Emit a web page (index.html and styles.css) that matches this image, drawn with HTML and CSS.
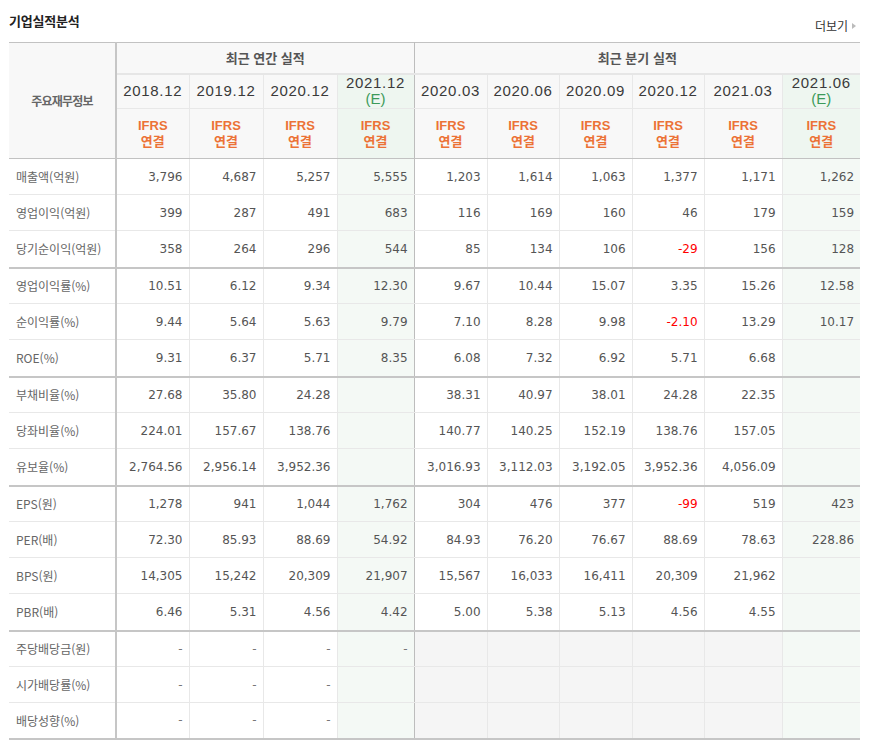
FILE: index.html
```html
<!DOCTYPE html>
<html lang="ko">
<head>
<meta charset="utf-8">
<title>기업실적분석</title>
<link rel="stylesheet" href="styles.css">
</head>
<body>
<div class="wrap">
  <div class="head">
    <h2 class="title">기업실적분석</h2>
    <a class="more" href="#">더보기<span class="arr"></span></a>
  </div>
  <table class="fin">
    <colgroup>
      <col class="c-label"><col class="c73"><col class="c74"><col class="c74"><col class="c77">
      <col class="c73"><col class="c72"><col class="c73"><col class="c72"><col class="c78"><col class="c78">
    </colgroup>
    <thead>
      <tr class="h1">
        <th class="lab-h" rowspan="3">주요재무정보</th>
        <th colspan="4">최근 연간 실적</th>
        <th class="sep" colspan="6">최근 분기 실적</th>
      </tr>
      <tr class="h2">
        <th class="d">2018.12</th><th class="d">2019.12</th><th class="d">2020.12</th>
        <th class="d e">2021.12<br><span class="est">(E)</span></th>
        <th class="d sep">2020.03</th><th class="d">2020.06</th><th class="d">2020.09</th>
        <th class="d">2020.12</th><th class="d">2021.03</th>
        <th class="d e">2021.06<br><span class="est">(E)</span></th>
      </tr>
      <tr class="h3">
        <th class="ifrs">IFRS<br>연결</th><th class="ifrs">IFRS<br>연결</th><th class="ifrs">IFRS<br>연결</th><th class="ifrs e">IFRS<br>연결</th>
        <th class="ifrs sep">IFRS<br>연결</th><th class="ifrs">IFRS<br>연결</th><th class="ifrs">IFRS<br>연결</th><th class="ifrs">IFRS<br>연결</th><th class="ifrs">IFRS<br>연결</th><th class="ifrs e">IFRS<br>연결</th>
      </tr>
    </thead>
    <tbody>
      <tr>
        <th class="lab">매출액(억원)</th>
        <td>3,796</td><td>4,687</td><td>5,257</td><td class="e">5,555</td>
        <td class="sep">1,203</td><td>1,614</td><td>1,063</td><td>1,377</td><td>1,171</td><td class="e">1,262</td>
      </tr>
      <tr>
        <th class="lab">영업이익(억원)</th>
        <td>399</td><td>287</td><td>491</td><td class="e">683</td>
        <td class="sep">116</td><td>169</td><td>160</td><td>46</td><td>179</td><td class="e">159</td>
      </tr>
      <tr class="grp">
        <th class="lab">당기순이익(억원)</th>
        <td>358</td><td>264</td><td>296</td><td class="e">544</td>
        <td class="sep">85</td><td>134</td><td>106</td><td class="neg">-29</td><td>156</td><td class="e">128</td>
      </tr>
      <tr>
        <th class="lab">영업이익률(%)</th>
        <td>10.51</td><td>6.12</td><td>9.34</td><td class="e">12.30</td>
        <td class="sep">9.67</td><td>10.44</td><td>15.07</td><td>3.35</td><td>15.26</td><td class="e">12.58</td>
      </tr>
      <tr>
        <th class="lab">순이익률(%)</th>
        <td>9.44</td><td>5.64</td><td>5.63</td><td class="e">9.79</td>
        <td class="sep">7.10</td><td>8.28</td><td>9.98</td><td class="neg">-2.10</td><td>13.29</td><td class="e">10.17</td>
      </tr>
      <tr class="grp">
        <th class="lab">ROE(%)</th>
        <td>9.31</td><td>6.37</td><td>5.71</td><td class="e">8.35</td>
        <td class="sep">6.08</td><td>7.32</td><td>6.92</td><td>5.71</td><td>6.68</td><td class="e"></td>
      </tr>
      <tr>
        <th class="lab">부채비율(%)</th>
        <td>27.68</td><td>35.80</td><td>24.28</td><td class="e"></td>
        <td class="sep">38.31</td><td>40.97</td><td>38.01</td><td>24.28</td><td>22.35</td><td class="e"></td>
      </tr>
      <tr>
        <th class="lab">당좌비율(%)</th>
        <td>224.01</td><td>157.67</td><td>138.76</td><td class="e"></td>
        <td class="sep">140.77</td><td>140.25</td><td>152.19</td><td>138.76</td><td>157.05</td><td class="e"></td>
      </tr>
      <tr class="grp">
        <th class="lab">유보율(%)</th>
        <td>2,764.56</td><td>2,956.14</td><td>3,952.36</td><td class="e"></td>
        <td class="sep">3,016.93</td><td>3,112.03</td><td>3,192.05</td><td>3,952.36</td><td>4,056.09</td><td class="e"></td>
      </tr>
      <tr>
        <th class="lab">EPS(원)</th>
        <td>1,278</td><td>941</td><td>1,044</td><td class="e">1,762</td>
        <td class="sep">304</td><td>476</td><td>377</td><td class="neg">-99</td><td>519</td><td class="e">423</td>
      </tr>
      <tr>
        <th class="lab">PER(배)</th>
        <td>72.30</td><td>85.93</td><td>88.69</td><td class="e">54.92</td>
        <td class="sep">84.93</td><td>76.20</td><td>76.67</td><td>88.69</td><td>78.63</td><td class="e">228.86</td>
      </tr>
      <tr>
        <th class="lab">BPS(원)</th>
        <td>14,305</td><td>15,242</td><td>20,309</td><td class="e">21,907</td>
        <td class="sep">15,567</td><td>16,033</td><td>16,411</td><td>20,309</td><td>21,962</td><td class="e"></td>
      </tr>
      <tr class="grp">
        <th class="lab">PBR(배)</th>
        <td>6.46</td><td>5.31</td><td>4.56</td><td class="e">4.42</td>
        <td class="sep">5.00</td><td>5.38</td><td>5.13</td><td>4.56</td><td>4.55</td><td class="e"></td>
      </tr>
      <tr>
        <th class="lab">주당배당금(원)</th>
        <td class="dash">-</td><td class="dash">-</td><td class="dash">-</td><td class="e dash">-</td>
        <td class="sep blank"></td><td class="blank"></td><td class="blank"></td><td class="blank"></td><td class="blank"></td><td class="e"></td>
      </tr>
      <tr>
        <th class="lab">시가배당률(%)</th>
        <td class="dash">-</td><td class="dash">-</td><td class="dash">-</td><td class="e"></td>
        <td class="sep blank"></td><td class="blank"></td><td class="blank"></td><td class="blank"></td><td class="blank"></td><td class="e"></td>
      </tr>
      <tr class="last">
        <th class="lab">배당성향(%)</th>
        <td class="dash">-</td><td class="dash">-</td><td class="dash">-</td><td class="e"></td>
        <td class="sep blank"></td><td class="blank"></td><td class="blank"></td><td class="blank"></td><td class="blank"></td><td class="e"></td>
      </tr>
    </tbody>
  </table>
</div>
</body>
</html>
```

FILE: styles.css
```css
* { box-sizing: border-box; }

html, body {
  margin: 0;
  padding: 0;
  background: #fff;
}

body {
  font-family: "Noto Sans CJK KR", "Noto Sans", sans-serif;
  color: #333;
}

.wrap {
  width: 872px;
  padding: 0 12px 0 9px;
}

.head {
  display: flex;
  justify-content: space-between;
  align-items: flex-start;
  height: 42px;
}

.title {
  margin: 12px 0 0;
  font-size: 13px;
  line-height: 18px;
  font-weight: 700;
  color: #222;
  letter-spacing: -0.2px;
}

.more {
  margin: 17px 4px 0 0;
  display: flex;
  align-items: center;
  font-size: 12px;
  line-height: 18px;
  color: #333;
  text-decoration: none;
}

.arr {
  display: inline-block;
  width: 0;
  height: 0;
  margin-left: 4px;
  border-top: 3.5px solid transparent;
  border-bottom: 3.5px solid transparent;
  border-left: 4px solid #bbb;
}

.fin {
  width: 851px;
  table-layout: fixed;
  border-collapse: collapse;
  border-top: 1px solid #c2c2c2;
  border-bottom: 2px solid #c6c6c6;
}

.c-label { width: 107px; }
.c72 { width: 72px; }
.c73 { width: 73px; }
.c74 { width: 74px; }
.c77 { width: 77px; }
.c78 { width: 78px; }

.fin th,
.fin td {
  padding: 0;
  border-left: 1px solid #e8e8e8;
  border-bottom: 1px solid #e8e8e8;
}

.fin thead th {
  background: #f8f8f8;
  text-align: center;
  font-weight: 700;
}

.fin thead .e { background: #eef6f0; }

.h1 { height: 31px; }
.h1 th {
  font-size: 13px;
  color: #555;
  border-bottom: 2px solid #e6e6e6;
}

.h2 { height: 35px; }
.h3 { height: 50px; }

.fin thead .h3 th,
.fin thead .lab-h {
  border-bottom: 1px solid #c2c2c2;
}

.fin thead .lab-h {
  font-size: 12px;
  color: #666;
  letter-spacing: -0.8px;
  border-left: 0;
  border-right: 2px solid #c6c6c6;
}

.fin thead th.d {
  font-family: "Liberation Sans", Arial, sans-serif;
  font-weight: 400;
  font-size: 15px;
  line-height: 16px;
  letter-spacing: 0.7px;
  color: #3a3a3a;
}

.est {
  color: #3c9a5a;
  letter-spacing: 0;
}

.fin thead th.ifrs {
  font-family: "Liberation Sans", "Noto Sans CJK KR", sans-serif;
  font-size: 13px;
  line-height: 16px;
  color: #ec7236;
  font-weight: 700;
}

.fin .sep { border-left: 1px solid #bdbdbd; }

.fin tbody tr { height: 36px; }
.fin tbody tr.grp { height: 37px; }

.fin tbody th.lab {
  text-align: left;
  padding-left: 7px;
  font-size: 12px;
  font-weight: 400;
  color: #666;
  background: #fff;
  border-left: 0;
  border-right: 2px solid #c6c6c6;
  white-space: nowrap;
}

.fin tbody td {
  text-align: right;
  padding-right: 6px;
  font-family: "DejaVu Sans", Tahoma, sans-serif;
  font-size: 12px;
  color: #555;
  white-space: nowrap;
}

.fin tbody td.e { background: #f4f9f5; }
.fin tbody td.neg { color: #f00; }
.fin tbody td.blank { background: #f5f5f5; }
.fin tbody td.dash { color: #777; }

.fin tbody tr.grp th,
.fin tbody tr.grp td {
  border-bottom: 2px solid #c6c6c6;
}
```
